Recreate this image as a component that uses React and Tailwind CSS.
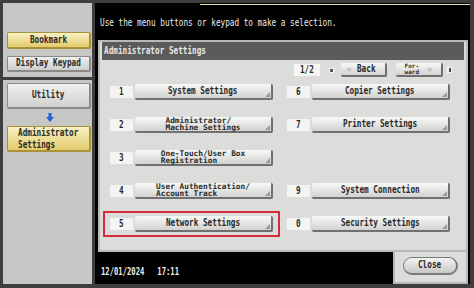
import React from 'react';

const FONT = "font-['DejaVu_Sans_Mono',monospace]";

const LEFT_ITEMS = [
  { n: '1', label: ['System Settings'] },
  { n: '2', label: ['Administrator/', 'Machine Settings'] },
  { n: '3', label: ['One-Touch/User Box', 'Registration'] },
  { n: '4', label: ['User Authentication/', 'Account Track'] },
  { n: '5', label: ['Network Settings'], selected: true },
];

const RIGHT_ITEMS = [
  { n: '6', label: ['Copier Settings'] },
  { n: '7', label: ['Printer Settings'] },
  null,
  { n: '9', label: ['System Connection'] },
  { n: '0', label: ['Security Settings'] },
];

function Label({ lines }) {
  if (lines.length === 1) {
    return (
      <span className="inline-block scale-x-[0.7] text-[11px] font-bold text-[#2a2a2a] whitespace-nowrap">
        {lines[0]}
      </span>
    );
  }
  return (
    <span className="inline-flex flex-col text-left text-[7.8px] leading-[7.5px] font-bold text-[#2a2a2a] whitespace-nowrap">
      {lines.map(l => (
        <span key={l}>{l}</span>
      ))}
    </span>
  );
}

function Grip() {
  return (
    <svg className="absolute right-[1px] bottom-[1px]" width="5" height="5" viewBox="0 0 5 5">
      <polygon points="5,0 5,5 0,5" fill="#9a9a98" />
    </svg>
  );
}

function MenuCell({ item, width }) {
  if (!item) return <div className={width} />;
  return (
    <div
      className={`${width} h-[26px] border-2 pl-[5px] flex items-center gap-[2px] ${
        item.selected ? 'border-[#d42c3c]' : 'border-transparent'
      }`}
    >
      <div className="w-[23px] h-[12px] bg-[#f4f4f2] flex items-center justify-center">
        <span className="inline-block scale-x-[0.7] text-[11px] font-bold text-[#2a2a2a]">{item.n}</span>
      </div>
      <div className="relative w-[138px] h-[16px] rounded-[2px] bg-linear-to-b from-[#f8f8f6] to-[#d2d2d0] border-r-2 border-b-2 border-[#707070] flex items-center justify-center">
        <Label lines={item.label} />
        <Grip />
      </div>
    </div>
  );
}

function SideButton({ children, yellow, className }) {
  return (
    <div
      className={`${className} rounded-[2px] border border-b-2 border-r-2 flex items-center ${
        yellow
          ? 'bg-linear-to-b from-[#f8f1c4] to-[#e2cb6a] border-[#a8913a]'
          : 'bg-linear-to-b from-[#f0f0ee] to-[#cfcfcd] border-[#8a8a88]'
      }`}
    >
      {children}
    </div>
  );
}

export default function App() {
  return (
    <div className={`w-[474px] h-[288px] bg-[#3e3e3e] pt-[3px] pl-[3px] pr-[4px] pb-[4px] flex gap-[3px] ${FONT}`}>
      {/* Left side panel */}
      <div className="w-[89px] flex flex-col gap-[3px]">
        <div className="h-[74px] bg-[#c6c6c4] pl-[4px] pt-[29px] flex flex-col gap-[7px]">
          <SideButton yellow className="w-[84px] h-[17px] justify-center">
            <span className="inline-block scale-x-[0.7] text-[11px] font-bold text-[#2a2a2a]">Bookmark</span>
          </SideButton>
          <SideButton className="w-[84px] h-[16px] justify-center">
            <span className="inline-block scale-x-[0.7] text-[11px] font-bold text-[#2a2a2a] whitespace-nowrap">Display Keypad</span>
          </SideButton>
        </div>
        <div className="flex-1 bg-[#c6c6c4] pl-[4px] pt-[3px] flex flex-col">
          <SideButton className="w-[84px] h-[26px] justify-center">
            <span className="inline-block scale-x-[0.7] text-[11px] font-bold text-[#2a2a2a]">Utility</span>
          </SideButton>
          <div className="h-[17px] flex items-center justify-center">
            <svg width="8" height="9" viewBox="0 0 8 9">
              <rect x="2.5" y="0" width="3" height="4" fill="#1f5fd6" />
              <polygon points="0,4 8,4 4,9" fill="#1f5fd6" />
            </svg>
          </div>
          <SideButton yellow className="w-[84px] h-[26px] justify-start pl-[10px]">
            <span className="inline-flex flex-col origin-left scale-x-[0.7] text-[11px] leading-[12px] font-bold text-[#2a2a2a] whitespace-nowrap">
              <span>Administrator</span>
              <span>Settings</span>
            </span>
          </SideButton>
        </div>
      </div>

      {/* Main area */}
      <div className="flex-1 bg-black flex flex-col">
        <div className="h-[37px] flex flex-col">
          <div className="h-[2px] flex">
            <div className="w-[105px]" />
            <div className="flex-1 h-[1px] mt-[1px] bg-[#e6dfb2]" />
          </div>
          <div className="pl-[5px] pt-[4px]">
            <span className="inline-block origin-left scale-x-[0.77] text-[10px] text-[#ececec] whitespace-nowrap">
              Use the menu buttons or keypad to make a selection.
            </span>
          </div>
        </div>

        <div className="ml-[3px] mr-[2px] h-[212px] bg-[#dcddda] border-2 border-[#b8b8b6] flex flex-col">
          <div className="mx-[2px] h-[18px] bg-[#5b5b5b] pl-[2px] flex items-center">
            <span className="inline-block origin-left scale-x-[0.7] text-[11px] font-bold text-[#e6e6e6] whitespace-nowrap">
              Administrator Settings
            </span>
          </div>

          <div className="mt-[3px] h-[14px] flex items-center justify-end pr-[14px]">
            <div className="w-[26px] h-[12px] bg-[#f6f6f4] flex items-center justify-center">
              <span className="inline-block scale-x-[0.7] text-[11px] font-bold text-[#2a2a2a]">1/2</span>
            </div>
            <div className="ml-[9px] w-[5px] h-[5px] bg-[#f4f4f2] flex items-center justify-center">
              <div className="w-[3px] h-[3px] bg-[#555]" />
            </div>
            <div className="ml-[7px] w-[46px] h-[14px] rounded-[2px] bg-linear-to-b from-[#f8f8f6] to-[#d2d2d0] border-r-2 border-b-2 border-[#707070] flex items-center justify-center gap-[1px]">
              <span className="text-[9px] text-[#a8a8a6] leading-none">«</span>
              <span className="inline-block scale-x-[0.7] text-[11px] font-bold text-[#2a2a2a]">Back</span>
            </div>
            <div className="ml-[9px] w-[47px] h-[14px] rounded-[2px] bg-linear-to-b from-[#f8f8f6] to-[#d2d2d0] border-r-2 border-b-2 border-[#707070] flex items-center justify-center gap-[8px]">
              <span className="inline-flex flex-col text-[6px] leading-[6px] font-bold text-[#2a2a2a]">
                <span>For-</span>
                <span>ward</span>
              </span>
              <span className="text-[9px] text-[#a8a8a6] leading-none">»</span>
            </div>
            <div className="ml-[4px] w-[5px] h-[6px] bg-[#f4f4f2] flex items-center justify-center">
              <div className="w-[2px] h-[4px] bg-[#444]" />
            </div>
          </div>

          <div className="mt-[2px] pl-[3px] grid grid-cols-[177px_180px] gap-y-[7px]">
            {LEFT_ITEMS.map((item, i) => (
              <React.Fragment key={i}>
                <MenuCell item={item} width="w-[177px]" />
                <MenuCell item={RIGHT_ITEMS[i]} width="w-[180px]" />
              </React.Fragment>
            ))}
          </div>
        </div>

        <div className="flex-1 flex">
          <div className="flex-1 pl-[6px] pt-[12px] flex items-start">
            <span className="inline-block origin-left scale-x-[0.72] text-[10px] font-bold text-[#ececec] whitespace-nowrap">
              12/01/2024&nbsp;&nbsp;&nbsp;17:11
            </span>
          </div>
          <div className="w-[75px] mr-[2px] bg-[#dcddda] border-x-2 border-b-2 border-[#b8b8b6] pl-[8px] pt-[5px]">
            <div className="w-[55px] h-[18px] rounded-full bg-linear-to-b from-[#f4f4f2] to-[#c8c8c6] border border-b-2 border-r-2 border-[#7a7a78] flex items-center justify-center">
              <span className="inline-block scale-x-[0.7] text-[11px] font-bold text-[#2a2a2a]">Close</span>
            </div>
          </div>
        </div>
      </div>
    </div>
  );
}
